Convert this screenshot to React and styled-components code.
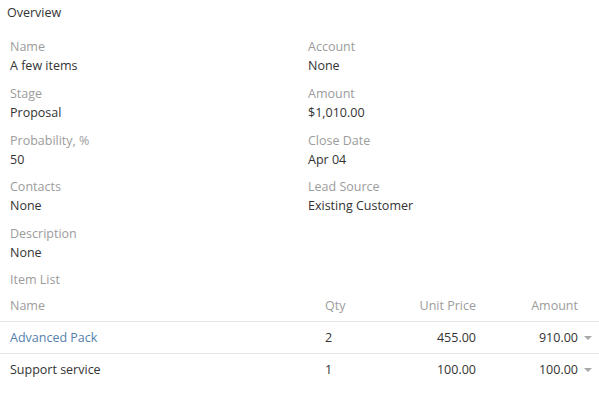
import styled, { createGlobalStyle } from "styled-components";

const GlobalStyle = createGlobalStyle`
  body {
    margin: 0;
    background: #fff;
    font-family: "Open Sans", "Liberation Sans", sans-serif;
    font-size: 12.5px;
    color: #333;
  }
`;

const fields = [
  ["Name", "A few items", "Account", "None"],
  ["Stage", "Proposal", "Amount", "$1,010.00"],
  ["Probability, %", "50", "Close Date", "Apr 04"],
  ["Contacts", "None", "Lead Source", "Existing Customer"],
  ["Description", "None"],
];

const items = [
  { name: "Advanced Pack", qty: "2", price: "455.00", amount: "910.00", link: true },
  { name: "Support service", qty: "1", price: "100.00", amount: "100.00" },
];

const Panel = styled.section`
  width: 599px;
`;

const Heading = styled.div`
  padding: 3px 7px 0;
  line-height: 19px;
  color: #333;
`;

const Fields = styled.div`
  display: grid;
  grid-template-columns: 298px 1fr;
  row-gap: 8.75px;
  padding: 15px 0 0 10px;
`;

const Cell = styled.div`
  line-height: 19px;
`;

const Label = styled.div`
  color: #9c9c9c;
`;

const Value = styled.div`
  color: #333;
`;

const Section = styled.div`
  padding: 8px 0 0 10px;
  line-height: 19px;
  color: #9c9c9c;
`;

const Table = styled.div`
  margin-top: 1px;
`;

const Row = styled.div`
  display: grid;
  grid-template-columns: 315px 71px 100px 1fr;
  line-height: 19px;
  border-bottom: ${(p) => (p.$last ? "none" : "1px solid #e8e8e8")};
  color: ${(p) => (p.$head ? "#9c9c9c" : "#333")};
`;

const Col = styled.div`
  padding: 6px 10px;
  text-align: ${(p) => (p.$right ? "right" : "left")};
`;

const AmountCol = styled(Col)`
  padding-right: 21px;
  position: relative;
`;

const Caret = styled.span`
  position: absolute;
  right: 7px;
  top: 50%;
  margin-top: -2px;
  width: 0;
  height: 0;
  border-left: 4px solid transparent;
  border-right: 4px solid transparent;
  border-top: 4px solid #a8a8a8;
`;

const ItemLink = styled.a`
  color: #5580ad;
  text-decoration: none;
`;

export default function App() {
  return (
    <Panel>
      <GlobalStyle />
      <Heading>Overview</Heading>
      <Fields>
        {fields.map((f) => [
          <Cell key={f[0]}>
            <Label>{f[0]}</Label>
            <Value>{f[1]}</Value>
          </Cell>,
          f[2] ? (
            <Cell key={f[2]}>
              <Label>{f[2]}</Label>
              <Value>{f[3]}</Value>
            </Cell>
          ) : (
            <Cell key={f[0] + "-empty"} />
          ),
        ])}
      </Fields>
      <Section>Item List</Section>
      <Table>
        <Row $head>
          <Col>Name</Col>
          <Col>Qty</Col>
          <Col $right>Unit Price</Col>
          <AmountCol $right>Amount</AmountCol>
        </Row>
        {items.map((it, i) => (
          <Row key={it.name} $last={i === items.length - 1}>
            <Col>{it.link ? <ItemLink href="#">{it.name}</ItemLink> : it.name}</Col>
            <Col>{it.qty}</Col>
            <Col $right>{it.price}</Col>
            <AmountCol $right>
              {it.amount}
              <Caret />
            </AmountCol>
          </Row>
        ))}
      </Table>
    </Panel>
  );
}
